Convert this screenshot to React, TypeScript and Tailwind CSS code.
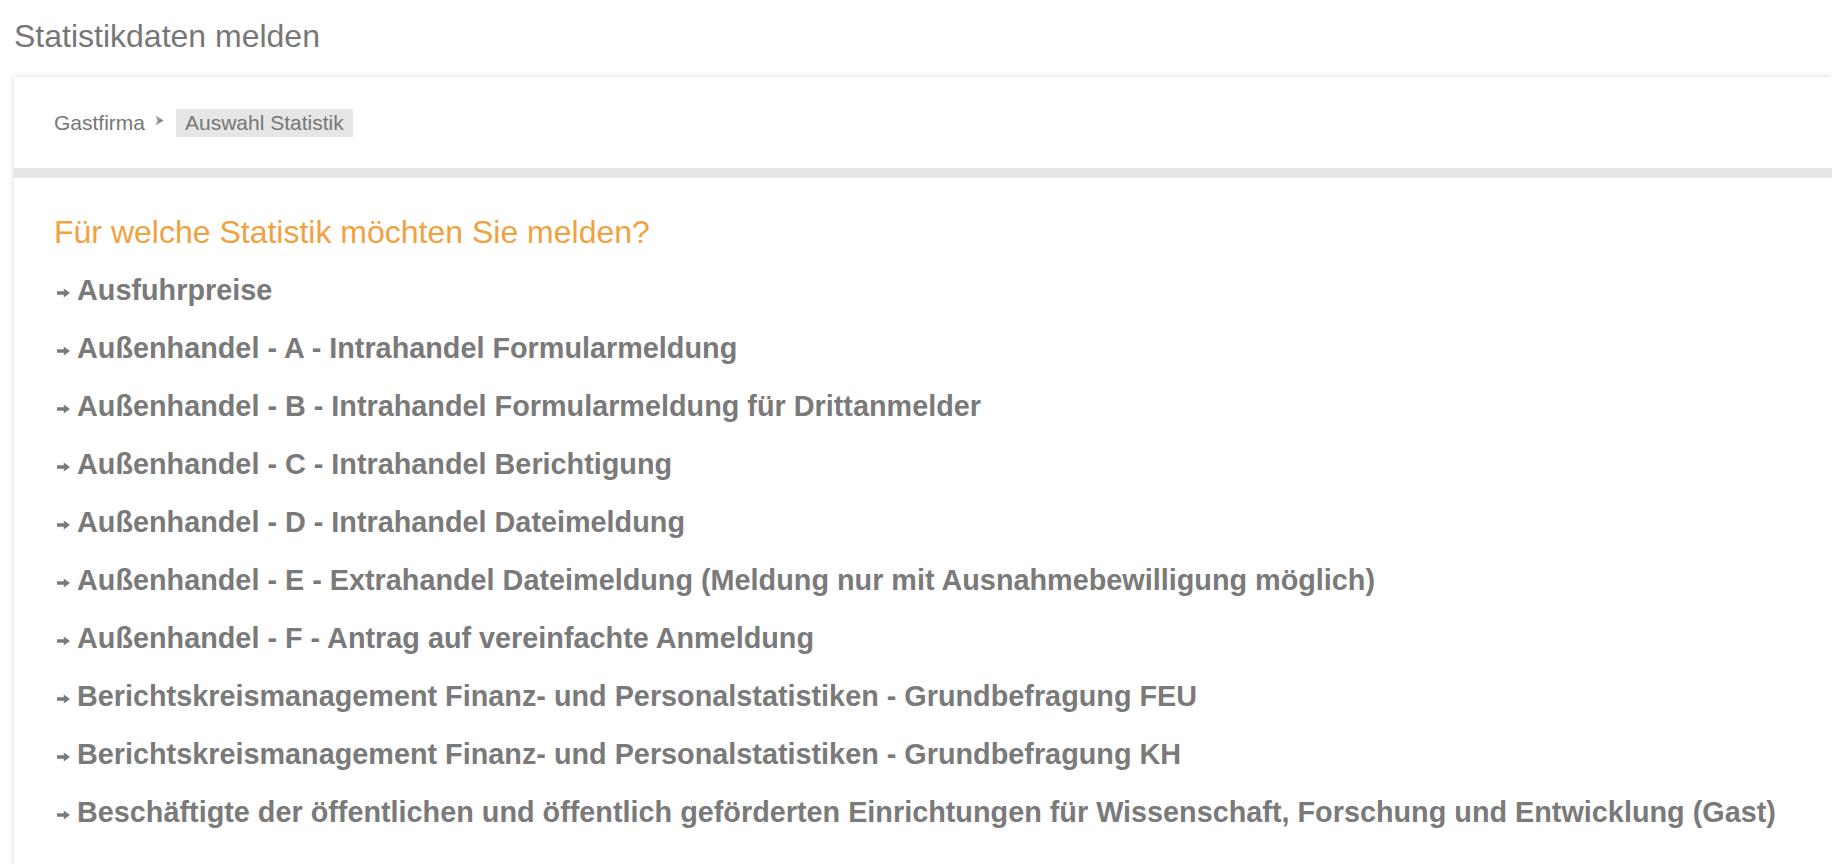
import React from "react";

const items: string[] = [
  "Ausfuhrpreise",
  "Außenhandel - A - Intrahandel Formularmeldung",
  "Außenhandel - B - Intrahandel Formularmeldung für Drittanmelder",
  "Außenhandel - C - Intrahandel Berichtigung",
  "Außenhandel - D - Intrahandel Dateimeldung",
  "Außenhandel - E - Extrahandel Dateimeldung (Meldung nur mit Ausnahmebewilligung möglich)",
  "Außenhandel - F - Antrag auf vereinfachte Anmeldung",
  "Berichtskreismanagement Finanz- und Personalstatistiken - Grundbefragung FEU",
  "Berichtskreismanagement Finanz- und Personalstatistiken - Grundbefragung KH",
  "Beschäftigte der öffentlichen und öffentlich geförderten Einrichtungen für Wissenschaft, Forschung und Entwicklung (Gast)",
];

const ListArrow: React.FC = () => (
  <svg width="13" height="10" viewBox="0 0 13 10" className="ml-[3px] mr-[7px] mt-[5px] shrink-0">
    <path d="M0 3.3h6.8V0.4L13 5 6.8 9.6V6.7H0z" fill="#7a7a7a" />
  </svg>
);

const CrumbArrow: React.FC = () => (
  <svg width="9" height="11" viewBox="0 0 9 11" className="ml-[10px] mr-[12px] mb-[4px] shrink-0">
    <defs>
      <linearGradient id="crumb" x1="0" y1="0" x2="1" y2="0">
        <stop offset="0" stopColor="#b0b0b0" />
        <stop offset="1" stopColor="#6f6f6f" />
      </linearGradient>
    </defs>
    <path d="M0.5 0.5L8.5 5.5 0.5 10.5 2.4 5.5z" fill="url(#crumb)" />
  </svg>
);

export default function App() {
  return (
    <div className="min-h-screen bg-white font-['Liberation_Sans',Arial,sans-serif] text-[#777] overflow-hidden">
      <h1 className="pl-[14px] pt-[18px] text-[32px] leading-[36px] text-[#777]">
        Statistikdaten melden
      </h1>

      <div className="ml-[14px] mt-[23px] bg-white shadow-[0_0_6px_rgba(0,0,0,0.16)]">
        {/* breadcrumb */}
        <div className="flex items-center h-[91px] pl-[40px] text-[21px]">
          <span className="leading-[28px]">Gastfirma</span>
          <CrumbArrow />
          <span className="bg-[#e6e6e6] px-[9px] leading-[28px]">Auswahl Statistik</span>
        </div>

        <div className="h-[10px] bg-[#e5e5e5]" />

        <div className="pl-[40px] pt-[36px] pb-[40px]">
          <h2 className="text-[32px] leading-[36px] text-[#f2a13f]">
            Für welche Statistik möchten Sie melden?
          </h2>
          <ul className="mt-[11px]">
            {items.map((item) => (
              <li key={item} className="flex items-center h-[58px]">
                <ListArrow />
                <a className="text-[28.8px] leading-[58px] font-bold text-[#7a7a7a] whitespace-nowrap cursor-pointer">
                  {item}
                </a>
              </li>
            ))}
          </ul>
        </div>
      </div>
    </div>
  );
}
